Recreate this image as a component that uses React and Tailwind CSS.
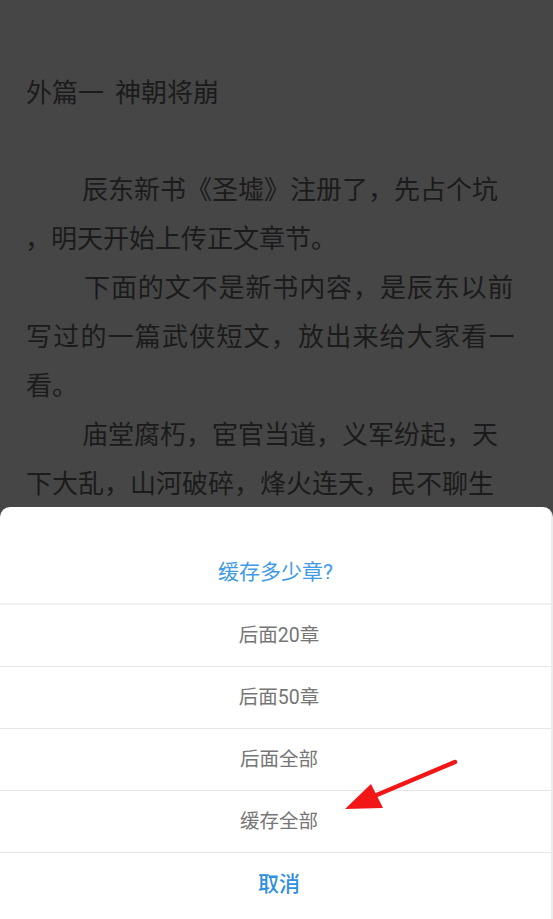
import React from "react";

const lineCls = "h-[49px] leading-[49px] whitespace-nowrap";

function Arrow() {
  return (
    <svg
      className="absolute left-0 top-0 pointer-events-none"
      width="553"
      height="919"
      viewBox="0 0 553 919"
    >
      <line x1="455" y1="762" x2="372" y2="797" stroke="#f21616" strokeWidth="4.5" strokeLinecap="round" />
      <polygon points="345,809 371,784 383,808" fill="#f21616" />
    </svg>
  );
}

export default function App() {
  const rows = ["后面20章", "后面50章", "后面全部", "缓存全部"];
  return (
    <div className="relative w-[553px] h-[919px] overflow-hidden bg-[#464646] flex flex-col">
      <div
        className="h-[507px] shrink-0 pl-[26px] pt-[66px] text-[26px] text-[#1b1b1b]"
        style={{ fontFamily: '"Noto Sans CJK SC", sans-serif' }}
      >
        <div className={lineCls}>
          外篇一<span className="inline-block w-[11px]" />神朝将崩
        </div>
        <div className="h-[48px]" />
        <div className={lineCls + " pl-[56px]"}>辰东新书《圣墟》注册了，先占个坑</div>
        <div className={lineCls + " -ml-[1px]"}>，明天开始上传正文章节。</div>
        <div className={lineCls + " pl-[58px] tracking-[0.9px]"}>下面的文不是新书内容，是辰东以前</div>
        <div className={lineCls + " tracking-[1.2px]"}>写过的一篇武侠短文，放出来给大家看一</div>
        <div className={lineCls}>看。</div>
        <div className={lineCls + " pl-[56px]"}>庙堂腐朽，宦官当道，义军纷起，天</div>
        <div className={lineCls}>下大乱，山河破碎，烽火连天，民不聊生</div>
      </div>
      <div
        className="flex-1 bg-white rounded-t-[10px] flex flex-col border-r-2 border-[#ececec]"
        style={{ fontFamily: 'Roboto, "Noto Sans CJK SC", sans-serif' }}
      >
        <div className="h-[96px] flex items-end justify-center pb-[17px] text-[21px] leading-[28px] text-[#3f9be8]">
          缓存多少章?
        </div>
        <div className="h-[2px] bg-[#f1f1f1]" />
        {rows.map((r) => (
          <React.Fragment key={r}>
            <div className="h-[61px] flex items-center justify-center pl-[7px] text-[19.5px] text-[#767676]">
              {r}
            </div>
            <div className="h-[1px] bg-[#e6e6e6]" />
          </React.Fragment>
        ))}
        <div className="flex-1 flex items-center justify-center pl-[7px] pb-[2px] text-[21px] font-medium text-[#2f8fe3]">
          取消
        </div>
      </div>
      <Arrow />
    </div>
  );
}
